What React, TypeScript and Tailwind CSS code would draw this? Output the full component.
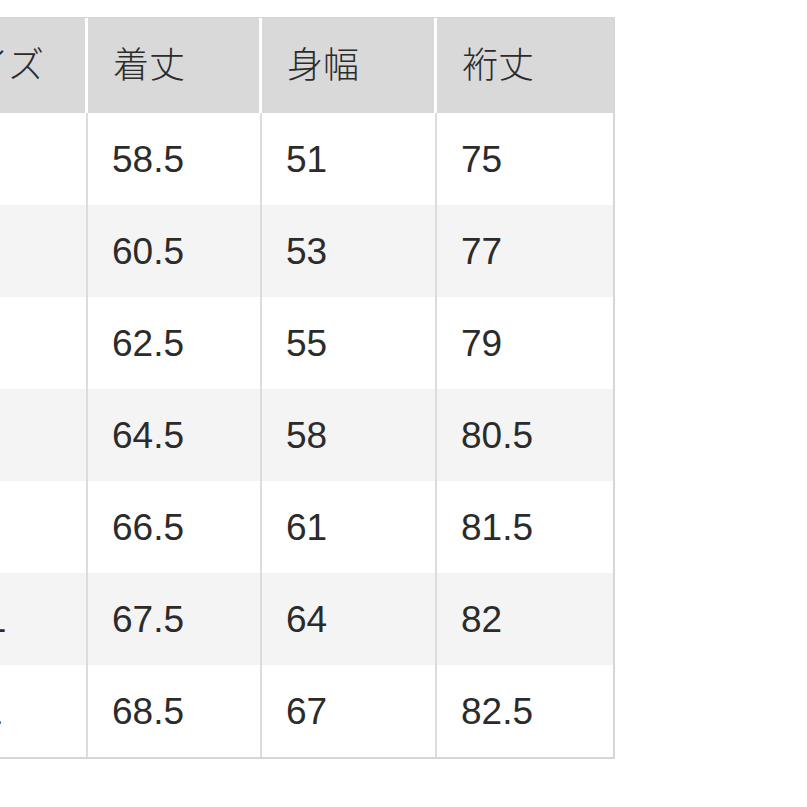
const headers = ['サイズ', '着丈', '身幅', '裄丈']

const rows = [
  ['XS', '58.5', '51', '75'],
  ['S', '60.5', '53', '77'],
  ['M', '62.5', '55', '79'],
  ['L', '64.5', '58', '80.5'],
  ['XL', '66.5', '61', '81.5'],
  ['XXL', '67.5', '64', '82'],
  ['3XL', '68.5', '67', '82.5'],
]

const font = { fontFamily: '"Liberation Sans", "Noto Sans CJK JP", sans-serif' }

export default function App() {
  return (
    <div className="h-[807px] w-[807px] overflow-hidden bg-white pt-[17px]" style={font}>
      {/* table is scrolled left, so the size column is cut off */}
      <div className="ml-[-88px] w-[703px] border-t border-r-2 border-b-2 border-[#d6d6d6] leading-none text-[#2b2b2b]">
        <div className="grid h-[95px] grid-cols-[176px_174px_175px_176px] bg-[#d9d9d9] text-[36px]">
          {headers.map((h, i) => (
            <div
              key={h}
              className={`flex items-center pl-[25px] ${i < 3 ? 'border-r-[3px] border-white' : ''}`}
            >
              <span className="font-light">{h}</span>
            </div>
          ))}
        </div>
        {rows.map((r, ri) => (
          <div
            key={r[0]}
            className={`grid h-[92px] grid-cols-[176px_174px_175px_176px] text-[37px] ${ri % 2 === 1 ? 'bg-[#f4f4f4]' : 'bg-white'}`}
          >
            {r.map((c, i) => (
              <div
                key={i}
                className={`flex items-center pl-[24px] ${i < 3 ? 'border-r-2 border-[#dcdcdc]' : ''}`}
              >
                {c}
              </div>
            ))}
          </div>
        ))}
      </div>
    </div>
  )
}
